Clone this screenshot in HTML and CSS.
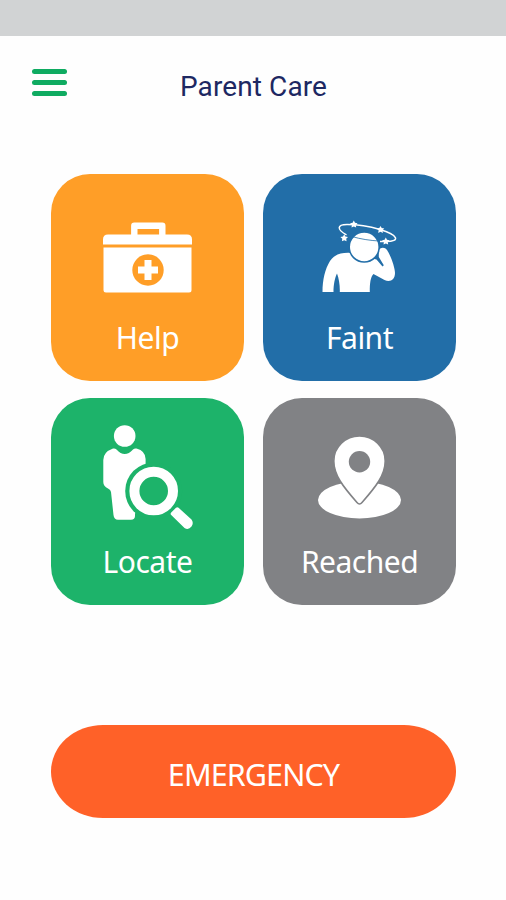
FILE: index.html
```html
<!DOCTYPE html>
<html lang="en">

<head>
    <meta charset="UTF-8">
    <title>Parent Care</title>
    <link rel="stylesheet" href="styles.css">
</head>

<body>
    <div class="statusbar"></div>

    <header class="header">
        <button class="menu" aria-label="Menu">
            <span></span>
            <span></span>
            <span></span>
        </button>
        <h1 class="title">Parent Care</h1>
    </header>

    <main class="content">
        <div class="tiles">
            <!-- First aid kit -->
            <button class="tile help">
                <svg class="icon" viewBox="0 0 120 120">
                    <path d="M46.3 46V35.7H74.3V46" fill="none" stroke="#fff" stroke-width="6.4" stroke-linejoin="round" />
                    <path d="M15 54.5V49.5Q15 44.5 20 44.5H99Q104 44.5 104 49.5V54.5Z" />
                    <path d="M15.5 57.5H103.5V100Q103.5 102.5 101 102.5H18Q15.5 102.5 15.5 100Z" />
                    <circle class="cut" cx="60" cy="80" r="15.7" />
                    <path d="M56.5 70H63.5V76.5H70V83.5H63.5V90H56.5V83.5H50V76.5H56.5Z" />
                </svg>
                <span class="label">Help</span>
            </button>

            <!-- Dizzy person holding the head -->
            <button class="tile faint">
                <svg class="icon" viewBox="0 0 120 120">
                    <path d="M22.5 102C22.5 90 25 79 30 71C34 65 40 62.5 49 62.7L76.5 69.5L82.5 76.5L83.8 75.2L78.8 67V61C79.5 57.5 84.5 56.5 87 60C91 66 95 78 95 83C95 90 90 92.500 84.500 90L73.500 84C70.500 87 69.800 93 69.800 102H39.800C40 95 39 89 37 83.500C34.800 88 33.500 95 33.500 102Z" />
                    <circle class="outlined" cx="64.200" cy="57" r="15" />
                    <path class="orbit" d="M46.500 44.800C36.500 39.500 37 34.500 47 34.500C59 34.500 70 36.500 80 39.500C98 45 101 51.500 86 51.500H80" />
                    <path class="orbit-front" d="M52 46.500C60 49 70 50.500 79 51" />
                    <g class="stars">
                        <path id="star" d="M53.800 30.600L55 32.800L57.600 33.200L55.800 35L56.200 37.600L53.800 36.500L51.500 37.600L51.900 35L50 33.200L52.600 32.800Z" />
                        <use href="#star" x="26.700" y="5.300" />
                        <use href="#star" x="32" y="17" />
                        <use href="#star" x="-9.600" y="13.700" />
                    </g>
                </svg>
                <span class="label">Faint</span>
            </button>

            <!-- Person under a magnifier -->
            <button class="tile locate">
                <svg class="icon" viewBox="0 0 120 120">
                    <circle cx="36.700" cy="22" r="10.800" />
                    <path d="M25 34.500Q27 34 28.500 35.500Q36.700 44.500 45 35.500Q46.500 34 48.500 34.500Q57.600 37 57.600 45V60L47 100V102Q47 105.700 43 105.700H30Q26 105.700 25.500 101L23 78Q22.700 75.800 20 74.500Q15.300 72 15.300 68V46Q15.300 38 25 34.500Z" />
                    <circle class="cut" cx="65.700" cy="77" r="28.500" />
                    <circle class="lens" cx="65.700" cy="77" r="19.300" />
                    <path d="M83.200 101Q82 99.700 83.200 98.400L88 93.800Q89.300 92.500 90.600 93.800L103.500 105.500Q106 109 103.500 112.500Q100.500 116.500 96.500 114Z" />
                </svg>
                <span class="label">Locate</span>
            </button>

            <!-- Map pin -->
            <button class="tile reached">
                <svg class="icon" viewBox="0 0 120 120">
                    <ellipse cx="59.500" cy="86" rx="41.500" ry="18.500" />
                    <path class="outlined" d="M59.500 22C45.500 22 33.800 33 33.800 47C33.800 61 43 72.500 57 88.500Q59.500 91.500 62 88.500C76 72.500 85.200 61 85.200 47C85.200 33 73.500 22 59.500 22Z" />
                    <circle class="cut" cx="59.500" cy="47.700" r="10.700" />
                </svg>
                <span class="label">Reached</span>
            </button>
        </div>

        <button class="emergency">EMERGENCY</button>
    </main>
</body>

</html>
```
FILE: styles.css
```css
* {
    box-sizing: border-box;
}

body {
    margin: 0;
    background-color: #fefefe;
    font-family: "Noto Sans", sans-serif;
}

button {
    border: none;
    padding: 0;
    font-family: inherit;
    cursor: pointer;
}

.statusbar {
    height: 36px;
    background-color: #d1d3d4;
}

.header {
    display: grid;
    grid-template-columns: 100px 1fr 100px;
    align-items: start;
    height: 138px;
    padding-top: 33px;
}

.menu {
    display: flex;
    flex-direction: column;
    gap: 5.4px;
    width: 35px;
    margin-left: 32px;
    background: none;
}

.menu span {
    height: 5.4px;
    border-radius: 3px;
    background-color: #0fab61;
}

.title {
    margin: 2px 0 0 1px;
    font-family: Roboto, sans-serif;
    font-size: 28px;
    font-weight: 400;
    line-height: 32px;
    letter-spacing: 0.1px;
    text-align: center;
    color: #1d2862;
}

.content {
    width: 405px;
    margin-left: 51px;
}

.tiles {
    display: grid;
    grid-template-columns: 193px 193px;
    gap: 17px 19px;
}

.tile {
    display: flex;
    flex-direction: column;
    align-items: center;
    height: 207px;
    padding-top: 16px;
    border-radius: 39px;
    background-color: var(--tile);
    color: #fff;
}

.help {
    --tile: #ff9e27;
}

.faint {
    --tile: #226ea8;
}

.locate {
    --tile: #1db36a;
}

.reached {
    --tile: #818285;
}

/* Icons */
.icon {
    width: 120px;
    height: 120px;
    fill: #fff;
}

.cut {
    fill: var(--tile);
}

.outlined {
    stroke: var(--tile);
    stroke-width: 1.6;
}

.lens {
    fill: none;
    stroke: #fff;
    stroke-width: 10;
}

.orbit,
.orbit-front {
    fill: none;
    stroke: #fff;
    stroke-width: 1.5;
}

.orbit-front {
    stroke: var(--tile);
    stroke-width: 0.8;
}

.label {
    margin-top: 7px;
    font-size: 30px;
    line-height: 42px;
    letter-spacing: -0.5px;
}

.emergency {
    display: block;
    width: 405px;
    height: 93px;
    margin-top: 120px;
    padding-top: 5px;
    border-radius: 52px / 46.5px;
    background-color: #ff6128;
    color: #fff;
    font-size: 30.5px;
    letter-spacing: -0.9px;
}
```
